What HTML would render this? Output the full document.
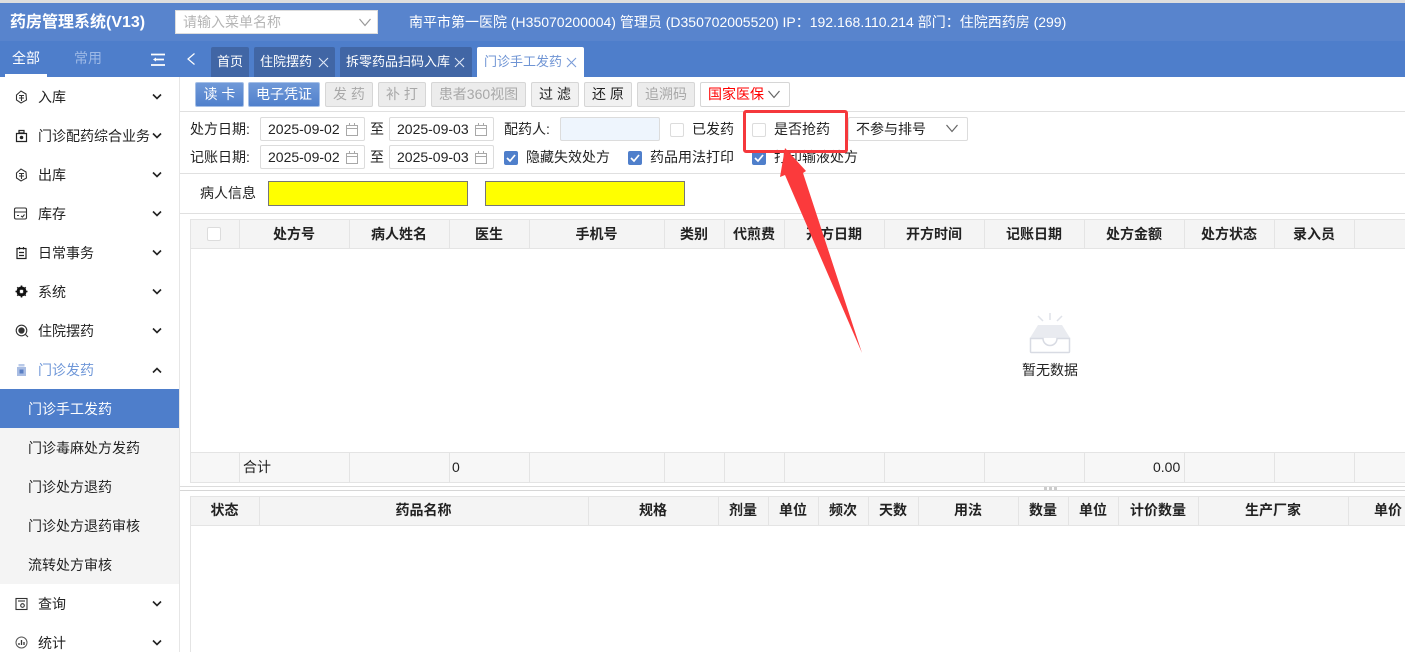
<!DOCTYPE html>
<html lang="zh"><head><meta charset="utf-8"><title>药房管理系统</title>
<style>
*{box-sizing:border-box}
html,body{margin:0;padding:0;width:1405px;height:652px;overflow:hidden;background:#fff}
body{position:relative;font:14px/20px "Liberation Sans","Noto Sans CJK SC",sans-serif;color:#222}
.a,.t,.b,.l,.cb,.ip{position:absolute}
.t{white-space:nowrap}
.c{text-align:center}
.tab{position:absolute;top:47px;height:30px;background:#4166a5;color:#fff;font-size:13px;line-height:30px;padding-left:6px;border-radius:2px 2px 0 0;white-space:nowrap}
.b{height:25px;top:82px;border:1px solid #d6d6d6;border-radius:2px;background:#f1f1f1;color:#222;text-align:center;line-height:23px;white-space:nowrap}
.b.blue{background:linear-gradient(#7099d8,#5080cc);border-color:#a5bfe6;color:#fff}
.b.dis{background:#ececec;color:#a8a8a8}
.ip{height:24px;border:1px solid #dcdcdc;border-radius:2px;background:#fff;padding-left:7px;line-height:22px;white-space:nowrap}
.ip svg{position:absolute;right:5px;top:4px}
.cb{width:14px;height:14px;border:1px solid #dcdcdc;border-radius:2px;background:#fff}
.cb.on{background:#4f7fcb;border-color:#4f7fcb}
.cb.on svg{position:absolute;left:1px;top:1px}
.m{position:absolute;left:38px;white-space:nowrap;color:#222}
.ar{position:absolute;left:151px}
.ic{position:absolute;left:14px}
.sub{position:absolute;left:0;width:179px;height:39px;line-height:41px;padding-left:28px;background:#f4f4f4;color:#222}
.th{position:absolute;font-weight:bold;text-align:center;white-space:nowrap;color:#222}
.v{position:absolute;width:1px;background:#e4e4e4}
.h{position:absolute;height:1px;background:#e4e4e4}
</style></head><body>
<!-- top -->
<div class="a" style="left:0;top:0;width:1405px;height:3px;background:#dedede"></div>
<div class="a" style="left:0;top:3px;width:1405px;height:38px;background:#5884cd"></div>
<div class="a" style="left:0;top:41px;width:1405px;height:36px;background:#4e7ecb"></div>
<div class="t" style="left:10px;top:12px;font-size:16px;font-weight:bold;color:#fff;line-height:21px">药房管理系统(V13)</div>
<div class="a" style="left:175px;top:10px;width:203px;height:24px;background:#fff;border:1px solid #ddd;color:#b5b5b5;padding-left:7px;line-height:22px">请输入菜单名称
<svg style="position:absolute;left:182px;top:7px" width="14" height="9" viewBox="0 0 14 9"><path d="M1.500 1 7 7.500 12.500 1" fill="none" stroke="#999" stroke-width="1.200"/></svg></div>
<div class="t" style="left:409px;top:12px;color:#fff">南平市第一医院 (H35070200004) 管理员 (D350702005520) IP：192.168.110.214 部门：住院西药房 (299)</div>

<!-- sidebar tabs -->
<div class="t" style="left:12px;top:48px;color:#fff">全部</div>
<div class="a" style="left:5px;top:74px;width:42px;height:3px;background:#fff"></div>
<div class="t" style="left:74px;top:48px;color:#9db9e6">常用</div>
<svg class="a" style="left:151px;top:53px" width="15" height="14" viewBox="0 0 15 14"><path d="M0 1.500H14M5 6.500H13M0 12H14" stroke="#fff" stroke-width="1.800"/><path d="M2 6.500 5 4.500V8.500Z" fill="#fff"/></svg>
<svg class="a" style="left:186px;top:52px" width="10" height="14" viewBox="0 0 10 14"><path d="M8.500 1.500 2 7l6.500 5.500" fill="none" stroke="#fff" stroke-width="1.200"/></svg>

<!-- page tabs -->
<div class="tab" style="left:211px;width:38px">首页</div>
<div class="tab" style="left:254px;width:81px">住院摆药</div>
<svg class="a" style="left:318px;top:57px" width="11" height="11" viewBox="0 0 11 11"><path d="M1 1l9 9M10 1l-9 9" stroke="#dfe8f6" stroke-width="1.100"/></svg>
<div class="tab" style="left:340px;width:132px">拆零药品扫码入库</div>
<svg class="a" style="left:454px;top:57px" width="11" height="11" viewBox="0 0 11 11"><path d="M1 1l9 9M10 1l-9 9" stroke="#dfe8f6" stroke-width="1.100"/></svg>
<div class="tab" style="left:477px;width:107px;background:#fff;color:#6f94d4;padding-left:7px">门诊手工发药</div>
<svg class="a" style="left:566px;top:57px" width="11" height="11" viewBox="0 0 11 11"><path d="M1 1l9 9M10 1l-9 9" stroke="#7a9cd8" stroke-width="1.100"/></svg>

<!-- sidebar -->
<div class="a" style="left:179px;top:77px;width:1px;height:575px;background:#e6e6e6"></div>
<div class="m" style="top:87px">入库</div>
<div class="m" style="top:126px">门诊配药综合业务</div>
<div class="m" style="top:165px">出库</div>
<div class="m" style="top:204px">库存</div>
<div class="m" style="top:243px">日常事务</div>
<div class="m" style="top:282px">系统</div>
<div class="m" style="top:321px">住院摆药</div>
<div class="m" style="top:360px;color:#6f97d8">门诊发药</div>
<div class="sub" style="top:389px;background:#4e7ecb;color:#fff">门诊手工发药</div>
<div class="sub" style="top:428px">门诊毒麻处方发药</div>
<div class="sub" style="top:467px">门诊处方退药</div>
<div class="sub" style="top:506px">门诊处方退药审核</div>
<div class="sub" style="top:545px">流转处方审核</div>
<div class="m" style="top:594px">查询</div>
<div class="m" style="top:633px">统计</div>

<!-- chevrons -->
<svg class="ar" style="top:93px" width="12" height="8" viewBox="0 0 12 8"><path d="M2 1.500 6 5.500 10 1.500" fill="none" stroke="#222" stroke-width="1.600"/></svg>
<svg class="ar" style="top:132px" width="12" height="8" viewBox="0 0 12 8"><path d="M2 1.500 6 5.500 10 1.500" fill="none" stroke="#222" stroke-width="1.600"/></svg>
<svg class="ar" style="top:171px" width="12" height="8" viewBox="0 0 12 8"><path d="M2 1.500 6 5.500 10 1.500" fill="none" stroke="#222" stroke-width="1.600"/></svg>
<svg class="ar" style="top:210px" width="12" height="8" viewBox="0 0 12 8"><path d="M2 1.500 6 5.500 10 1.500" fill="none" stroke="#222" stroke-width="1.600"/></svg>
<svg class="ar" style="top:249px" width="12" height="8" viewBox="0 0 12 8"><path d="M2 1.500 6 5.500 10 1.500" fill="none" stroke="#222" stroke-width="1.600"/></svg>
<svg class="ar" style="top:288px" width="12" height="8" viewBox="0 0 12 8"><path d="M2 1.500 6 5.500 10 1.500" fill="none" stroke="#222" stroke-width="1.600"/></svg>
<svg class="ar" style="top:327px" width="12" height="8" viewBox="0 0 12 8"><path d="M2 1.500 6 5.500 10 1.500" fill="none" stroke="#222" stroke-width="1.600"/></svg>
<svg class="ar" style="top:367px" width="12" height="8" viewBox="0 0 12 8"><path d="M2 5.500 6 1.500 10 5.500" fill="none" stroke="#222" stroke-width="1.600"/></svg>
<svg class="ar" style="top:600px" width="12" height="8" viewBox="0 0 12 8"><path d="M2 1.500 6 5.500 10 1.500" fill="none" stroke="#222" stroke-width="1.600"/></svg>
<svg class="ar" style="top:639px" width="12" height="8" viewBox="0 0 12 8"><path d="M2 1.500 6 5.500 10 1.500" fill="none" stroke="#222" stroke-width="1.600"/></svg>

<!-- menu icons -->
<svg class="ic" style="left:15px;top:90px" width="13" height="14" viewBox="0 0 13 14" fill="none" stroke="#333" stroke-width="1.100"><path d="M1.500 5 6 1 11 4 11.500 10 6 13 1.500 10Z"/><path d="M4 5.500H9M4 8H9M6.500 5.500V11"/></svg>
<svg class="ic" style="left:15px;top:129px" width="13" height="14" viewBox="0 0 13 14" fill="none" stroke="#222" stroke-width="1.200"><path d="M4 1.500H9V4H4Z"/><path d="M1.500 4.500H11.500V12.500H1.500Z"/><circle cx="6.500" cy="8.500" r="1.200" fill="#222"/></svg>
<svg class="ic" style="left:15px;top:168px" width="13" height="14" viewBox="0 0 13 14" fill="none" stroke="#333" stroke-width="1.100"><path d="M1.500 5 6 1 11 4 11.500 10 6 13 1.500 10Z"/><path d="M4 5.500H9M4 8H9M6.500 5.500V11"/></svg>
<svg class="ic" style="left:13px;top:206px" width="15" height="15" viewBox="0 0 15 15" fill="none" stroke="#333" stroke-width="1.100"><rect x="1.500" y="2" width="12" height="11" rx="1.500"/><path d="M1.500 6H13.500M4 9.500H6M8 10 9.500 11 11.500 8.500"/></svg>
<svg class="ic" style="left:15px;top:246px" width="13" height="14" viewBox="0 0 13 14" fill="none" stroke="#222" stroke-width="1.200"><rect x="2" y="2.500" width="9" height="10"/><path d="M4.500 1V3.500M8.500 1V3.500M4 6.500H9M4 9.500H9"/></svg>
<svg class="ic" style="left:15px;top:285px" width="13" height="13" viewBox="0 0 13 13"><circle cx="6.500" cy="6.500" r="3.800" fill="none" stroke="#111" stroke-width="2.400"/><path d="M6.500 .5V12.500M.5 6.500H12.500M2.300 2.300 10.700 10.700M10.700 2.300 2.300 10.700" stroke="#111" stroke-width="1.600"/><circle cx="6.500" cy="6.500" r="1.700" fill="#fff"/></svg>
<svg class="ic" style="left:15px;top:324px" width="14" height="14" viewBox="0 0 14 14" fill="none" stroke="#333" stroke-width="1.100"><circle cx="6.500" cy="6.500" r="5.300"/><circle cx="6.500" cy="6.500" r="2.600" fill="#333"/><path d="M10.500 10.500 13 13"/></svg>
<svg class="ic" style="left:16px;top:363px" width="11" height="14" viewBox="0 0 11 14"><rect x="2.500" y="1" width="6" height="2.500" fill="#b8c9e8"/><rect x="1" y="4" width="9" height="9" fill="#a9bde3"/><rect x="3.500" y="6.500" width="4" height="4" fill="#5a7fc4"/></svg>
<svg class="ic" style="left:15px;top:597px" width="13" height="14" viewBox="0 0 13 14" fill="none" stroke="#333" stroke-width="1.100"><rect x="1" y="1.500" width="11" height="11"/><path d="M3 4H10"/><circle cx="7.500" cy="8.500" r="1.800"/></svg>
<svg class="ic" style="left:15px;top:636px" width="13" height="13" viewBox="0 0 13 13" fill="none"><circle cx="6.500" cy="6.500" r="5.500" stroke="#555"/><path d="M4 9V7M6.500 9V4M9 9V6" stroke="#333" stroke-width="1.300"/></svg>

<!-- toolbar -->
<div class="b blue" style="left:195px;width:49px">读 卡</div>
<div class="b blue" style="left:248px;width:72px">电子凭证</div>
<div class="b dis" style="left:325px;width:48px">发 药</div>
<div class="b dis" style="left:378px;width:48px">补 打</div>
<div class="b dis" style="left:431px;width:95px">患者360视图</div>
<div class="b" style="left:531px;width:48px">过 滤</div>
<div class="b" style="left:584px;width:48px">还 原</div>
<div class="b dis" style="left:637px;width:58px">追溯码</div>
<div class="b" style="left:700px;width:90px;background:#fff;color:#f00;text-align:left;padding-left:7px">国家医保</div>
<svg class="a" style="left:767px;top:90px" width="14" height="9" viewBox="0 0 14 9"><path d="M1.500 1 7 7.500 12.500 1" fill="none" stroke="#666" stroke-width="1.200"/></svg>
<div class="h" style="left:180px;top:111px;width:1225px;background:#e0e0e0"></div>

<!-- form row 1 -->
<div class="t" style="left:190px;top:119px">处方日期:</div>
<div class="ip" style="left:260px;top:117px;width:105px">2025-09-02<svg width="14" height="15" viewBox="0 0 14 15" fill="none" stroke="#a8a8a8"><path d="M1.500 3.500H12.500V13.500H1.500ZM1.500 6.500H12.500M4.500 1V3.500M9.500 1V3.500"/></svg></div>
<div class="t" style="left:370px;top:119px">至</div>
<div class="ip" style="left:389px;top:117px;width:105px">2025-09-03<svg width="14" height="15" viewBox="0 0 14 15" fill="none" stroke="#a8a8a8"><path d="M1.500 3.500H12.500V13.500H1.500ZM1.500 6.500H12.500M4.500 1V3.500M9.500 1V3.500"/></svg></div>
<div class="t" style="left:504px;top:119px">配药人:</div>
<div class="ip" style="left:560px;top:117px;width:100px;background:#eef5fd"></div>
<div class="cb" style="left:670px;top:123px"></div>
<div class="t" style="left:692px;top:119px">已发药</div>
<div class="cb" style="left:752px;top:123px"></div>
<div class="t" style="left:774px;top:119px">是否抢药</div>
<div class="ip" style="left:848px;top:117px;width:120px">不参与排号</div>
<svg class="a" style="left:945px;top:124px" width="14" height="9" viewBox="0 0 14 9"><path d="M1.500 1 7 7.500 12.500 1" fill="none" stroke="#666" stroke-width="1.200"/></svg>

<!-- form row 2 -->
<div class="t" style="left:190px;top:147px">记账日期:</div>
<div class="ip" style="left:260px;top:145px;width:105px">2025-09-02<svg width="14" height="15" viewBox="0 0 14 15" fill="none" stroke="#a8a8a8"><path d="M1.500 3.500H12.500V13.500H1.500ZM1.500 6.500H12.500M4.500 1V3.500M9.500 1V3.500"/></svg></div>
<div class="t" style="left:370px;top:147px">至</div>
<div class="ip" style="left:389px;top:145px;width:105px">2025-09-03<svg width="14" height="15" viewBox="0 0 14 15" fill="none" stroke="#a8a8a8"><path d="M1.500 3.500H12.500V13.500H1.500ZM1.500 6.500H12.500M4.500 1V3.500M9.500 1V3.500"/></svg></div>
<div class="cb on" style="left:504px;top:151px"><svg width="10" height="10" viewBox="0 0 10 10"><path d="M1 5 4 8 9 2" fill="none" stroke="#fff" stroke-width="1.700"/></svg></div>
<div class="t" style="left:526px;top:147px">隐藏失效处方</div>
<div class="cb on" style="left:628px;top:151px"><svg width="10" height="10" viewBox="0 0 10 10"><path d="M1 5 4 8 9 2" fill="none" stroke="#fff" stroke-width="1.700"/></svg></div>
<div class="t" style="left:650px;top:147px">药品用法打印</div>
<div class="cb on" style="left:752px;top:151px"><svg width="10" height="10" viewBox="0 0 10 10"><path d="M1 5 4 8 9 2" fill="none" stroke="#fff" stroke-width="1.700"/></svg></div>
<div class="t" style="left:774px;top:147px">打印输液处方</div>
<div class="h" style="left:180px;top:173px;width:1225px;background:#e0e0e0"></div>

<!-- patient -->
<div class="t" style="left:200px;top:183px">病人信息</div>
<div class="a" style="left:268px;top:181px;width:200px;height:25px;background:#ff0;border:1px solid #767676"></div>
<div class="a" style="left:485px;top:181px;width:200px;height:25px;background:#ff0;border:1px solid #767676"></div>
<div class="h" style="left:180px;top:213px;width:1225px;background:#e0e0e0"></div>

<!-- table 1 -->
<div class="a" style="left:190px;top:219px;width:1215px;height:30px;background:#f4f4f4;border-top:1px solid #e4e4e4;border-bottom:1px solid #e4e4e4"></div>
<div class="a" style="left:190px;top:452px;width:1215px;height:31px;background:#f7f7f7;border-top:1px solid #e4e4e4;border-bottom:1px solid #e4e4e4"></div>
<div class="v" style="left:190px;top:219px;height:264px"></div>
<div class="v" style="left:239px;top:219px;height:30px"></div><div class="v" style="left:239px;top:452px;height:31px"></div>
<div class="v" style="left:349px;top:219px;height:30px"></div><div class="v" style="left:349px;top:452px;height:31px"></div>
<div class="v" style="left:449px;top:219px;height:30px"></div><div class="v" style="left:449px;top:452px;height:31px"></div>
<div class="v" style="left:529px;top:219px;height:30px"></div><div class="v" style="left:529px;top:452px;height:31px"></div>
<div class="v" style="left:664px;top:219px;height:30px"></div><div class="v" style="left:664px;top:452px;height:31px"></div>
<div class="v" style="left:724px;top:219px;height:30px"></div><div class="v" style="left:724px;top:452px;height:31px"></div>
<div class="v" style="left:784px;top:219px;height:30px"></div><div class="v" style="left:784px;top:452px;height:31px"></div>
<div class="v" style="left:884px;top:219px;height:30px"></div><div class="v" style="left:884px;top:452px;height:31px"></div>
<div class="v" style="left:984px;top:219px;height:30px"></div><div class="v" style="left:984px;top:452px;height:31px"></div>
<div class="v" style="left:1084px;top:219px;height:30px"></div><div class="v" style="left:1084px;top:452px;height:31px"></div>
<div class="v" style="left:1184px;top:219px;height:30px"></div><div class="v" style="left:1184px;top:452px;height:31px"></div>
<div class="v" style="left:1274px;top:219px;height:30px"></div><div class="v" style="left:1274px;top:452px;height:31px"></div>
<div class="v" style="left:1354px;top:219px;height:30px"></div><div class="v" style="left:1354px;top:452px;height:31px"></div>
<div class="cb" style="left:207px;top:227px;background:#fff"></div>
<div class="th" style="left:239px;width:110px;top:224px">处方号</div>
<div class="th" style="left:349px;width:100px;top:224px">病人姓名</div>
<div class="th" style="left:449px;width:80px;top:224px">医生</div>
<div class="th" style="left:529px;width:135px;top:224px">手机号</div>
<div class="th" style="left:664px;width:60px;top:224px">类别</div>
<div class="th" style="left:724px;width:60px;top:224px">代煎费</div>
<div class="th" style="left:784px;width:100px;top:224px">开方日期</div>
<div class="th" style="left:884px;width:100px;top:224px">开方时间</div>
<div class="th" style="left:984px;width:100px;top:224px">记账日期</div>
<div class="th" style="left:1084px;width:100px;top:224px">处方金额</div>
<div class="th" style="left:1184px;width:90px;top:224px">处方状态</div>
<div class="th" style="left:1274px;width:80px;top:224px">录入员</div>
<div class="t" style="left:243px;top:457px">合计</div>
<div class="t" style="left:452px;top:457px">0</div>
<div class="t" style="left:1153px;top:457px">0.00</div>

<!-- empty -->
<svg class="a" style="left:1028px;top:312px" width="44" height="43" viewBox="0 0 44 43"><path d="M22 1V8M10 4 15 9M34 4 29 9" stroke="#dfe2e9" stroke-width="1.500" fill="none"/><path d="M10 13H34L42 26H2Z" fill="#e9ebf0"/><path d="M2.500 26.500H15a7 7 0 0 0 14 0H41.500V39.500a1 1 0 0 1-1 1H3.500a1 1 0 0 1-1-1Z" fill="#fff" stroke="#d8dbe3" stroke-width="1.500"/></svg>
<div class="t" style="left:1022px;top:360px;font-size:14px">暂无数据</div>

<!-- splitter -->
<div class="h" style="left:180px;top:486px;width:1225px;background:#dcdcdc"></div>
<div class="h" style="left:180px;top:490px;width:1225px;background:#d6d6d6"></div>
<div class="a" style="left:1044px;top:487px;width:15px;height:3px;background:repeating-linear-gradient(90deg,#ccc 0 3px,#fff 3px 5px)"></div>

<!-- table 2 -->
<div class="a" style="left:190px;top:496px;width:1215px;height:30px;background:#f4f4f4;border-top:1px solid #e4e4e4;border-bottom:1px solid #e4e4e4"></div>
<div class="v" style="left:190px;top:496px;height:156px"></div>
<div class="v" style="left:259px;top:496px;height:30px"></div>
<div class="v" style="left:588px;top:496px;height:30px"></div>
<div class="v" style="left:718px;top:496px;height:30px"></div>
<div class="v" style="left:768px;top:496px;height:30px"></div>
<div class="v" style="left:818px;top:496px;height:30px"></div>
<div class="v" style="left:868px;top:496px;height:30px"></div>
<div class="v" style="left:918px;top:496px;height:30px"></div>
<div class="v" style="left:1018px;top:496px;height:30px"></div>
<div class="v" style="left:1068px;top:496px;height:30px"></div>
<div class="v" style="left:1118px;top:496px;height:30px"></div>
<div class="v" style="left:1198px;top:496px;height:30px"></div>
<div class="v" style="left:1348px;top:496px;height:30px"></div>
<div class="th" style="left:190px;width:69px;top:500px">状态</div>
<div class="th" style="left:259px;width:329px;top:500px">药品名称</div>
<div class="th" style="left:588px;width:130px;top:500px">规格</div>
<div class="th" style="left:718px;width:50px;top:500px">剂量</div>
<div class="th" style="left:768px;width:50px;top:500px">单位</div>
<div class="th" style="left:818px;width:50px;top:500px">频次</div>
<div class="th" style="left:868px;width:50px;top:500px">天数</div>
<div class="th" style="left:918px;width:100px;top:500px">用法</div>
<div class="th" style="left:1018px;width:50px;top:500px">数量</div>
<div class="th" style="left:1068px;width:50px;top:500px">单位</div>
<div class="th" style="left:1118px;width:80px;top:500px">计价数量</div>
<div class="th" style="left:1198px;width:150px;top:500px">生产厂家</div>
<div class="t" style="left:1374px;top:500px;font-weight:bold">单价</div>

<!-- annotation -->
<div class="a" style="left:743px;top:110px;width:105px;height:43px;border:3px solid #f5383c;border-radius:3px"></div>
<svg class="a" style="left:0;top:0;pointer-events:none" width="1405" height="652" viewBox="0 0 1405 652"><path d="M785 148 780 177 785 175 862 353 803 173 806 171Z" fill="#fb3a3c"/></svg>
</body></html>
